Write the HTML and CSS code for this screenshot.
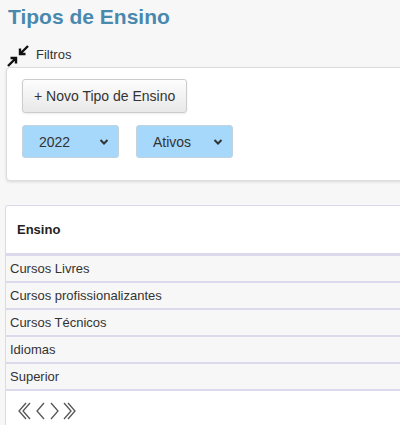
FILE: index.html
```html
<!DOCTYPE html>
<html lang="pt-BR">

<head>
    <meta charset="UTF-8">
    <title>Tipos de Ensino</title>
    <link rel="stylesheet" href="styles.css">
</head>

<body>
    <h1 class="titulo">Tipos de Ensino</h1>

    <div class="filtros-toggle">
        <svg class="icone-compress" width="22" height="22" viewBox="0 0 22 22">
            <path d="M21 1 L13 9 M13 3.5 L13 9 L18.5 9" fill="none" stroke="#111" stroke-width="2.4"/>
            <path d="M1 21 L9 13 M3.5 13 L9 13 L9 18.5" fill="none" stroke="#111" stroke-width="2.4"/>
        </svg>
        <span>Filtros</span>
    </div>

    <div class="card filtros">
        <button class="btn-novo">+ Novo Tipo de Ensino</button>
        <div class="selects">
            <div class="select-box">
                <span>2022</span>
                <svg width="10" height="8" viewBox="0 0 10 8"><path d="M1.5 2 L5 5.5 L8.5 2" fill="none" stroke="#333" stroke-width="2"/></svg>
            </div>
            <div class="select-box">
                <span>Ativos</span>
                <svg width="10" height="8" viewBox="0 0 10 8"><path d="M1.5 2 L5 5.5 L8.5 2" fill="none" stroke="#333" stroke-width="2"/></svg>
            </div>
        </div>
    </div>

    <div class="card tabela">
        <div class="tabela-head">Ensino</div>
        <div class="linha">Cursos Livres</div>
        <div class="linha">Cursos profissionalizantes</div>
        <div class="linha">Cursos Técnicos</div>
        <div class="linha">Idiomas</div>
        <div class="linha">Superior</div>
        <div class="paginacao">
            <svg width="60" height="20" viewBox="0 0 60 20">
                <path d="M8 2 L1 10 L8 18 M12 2 L5 10 L12 18" fill="none" stroke="#555" stroke-width="1.3"/>
                <path d="M26 2 L19 10 L26 18" fill="none" stroke="#555" stroke-width="1.3"/>
                <path d="M33 2 L40 10 L33 18" fill="none" stroke="#555" stroke-width="1.3"/>
                <path d="M46 2 L53 10 L46 18 M50 2 L57 10 L50 18" fill="none" stroke="#555" stroke-width="1.3"/>
            </svg>
        </div>
    </div>
</body>

</html>
```

FILE: styles.css
```css
html,
body {
    overflow-x: hidden;
}

body {
    font-family: 'Liberation Sans', Arial, sans-serif;
    background: #f7f7f7;
    margin: 0;
    padding: 0 0 0 5px;
    color: #333;
}

.titulo {
    margin: 0;
    padding: 4px 0 0 3px;
    font-size: 21px;
    line-height: 26px;
    color: #4a89ae;
    font-weight: bold;
}

.filtros-toggle {
    display: flex;
    align-items: center;
    gap: 7px;
    margin-top: 12px;
    padding-left: 2px;
    height: 24px;
    font-size: 13px;
    color: #333;
}

.icone-compress {
    margin-top: 3px;
}

.card {
    background: #fff;
    border: 1px solid #ddd;
    border-radius: 4px;
    width: 420px;
    box-sizing: border-box;
}

.filtros {
    margin-top: 1px;
    margin-left: 1px;
    padding: 11px 0 22px 15px;
    box-shadow: 0 1px 3px rgba(0, 0, 0, 0.12);
}

.btn-novo {
    font-family: inherit;
    font-size: 14px;
    color: #333;
    height: 34px;
    padding: 0 11px;
    border: 1px solid #ccc;
    border-radius: 3px;
    background: linear-gradient(#fdfdfd, #e8e8e8);
    box-shadow: 0 1px 2px rgba(0, 0, 0, 0.08);
}

.selects {
    display: flex;
    gap: 17px;
    margin-top: 12px;
}

.select-box {
    display: flex;
    align-items: center;
    justify-content: space-between;
    width: 97px;
    height: 33px;
    box-sizing: border-box;
    padding: 0 9px 0 16px;
    background: #a6d8fb;
    border: 1px solid #c3d3de;
    border-radius: 3px;
    font-size: 14px;
    color: #333;
}

.tabela {
    margin-top: 24px;
    border-color: #dcd9ec;
    border-radius: 3px 0 0 0;
    border-bottom: none;
}

.tabela-head {
    height: 47px;
    padding-left: 11px;
    display: flex;
    align-items: center;
    font-weight: bold;
    font-size: 13px;
    color: #222;
    border-bottom: 3px solid #dcd9ec;
}

.linha {
    height: 25px;
    line-height: 25px;
    padding-left: 4px;
    font-size: 13px;
    color: #333;
    background: #f7f7f7;
    border-bottom: 2px solid #dcd9ec;
}

.paginacao {
    background: #fff;
    padding: 10px 0 4px 12px;
    height: 22px;
}
```
